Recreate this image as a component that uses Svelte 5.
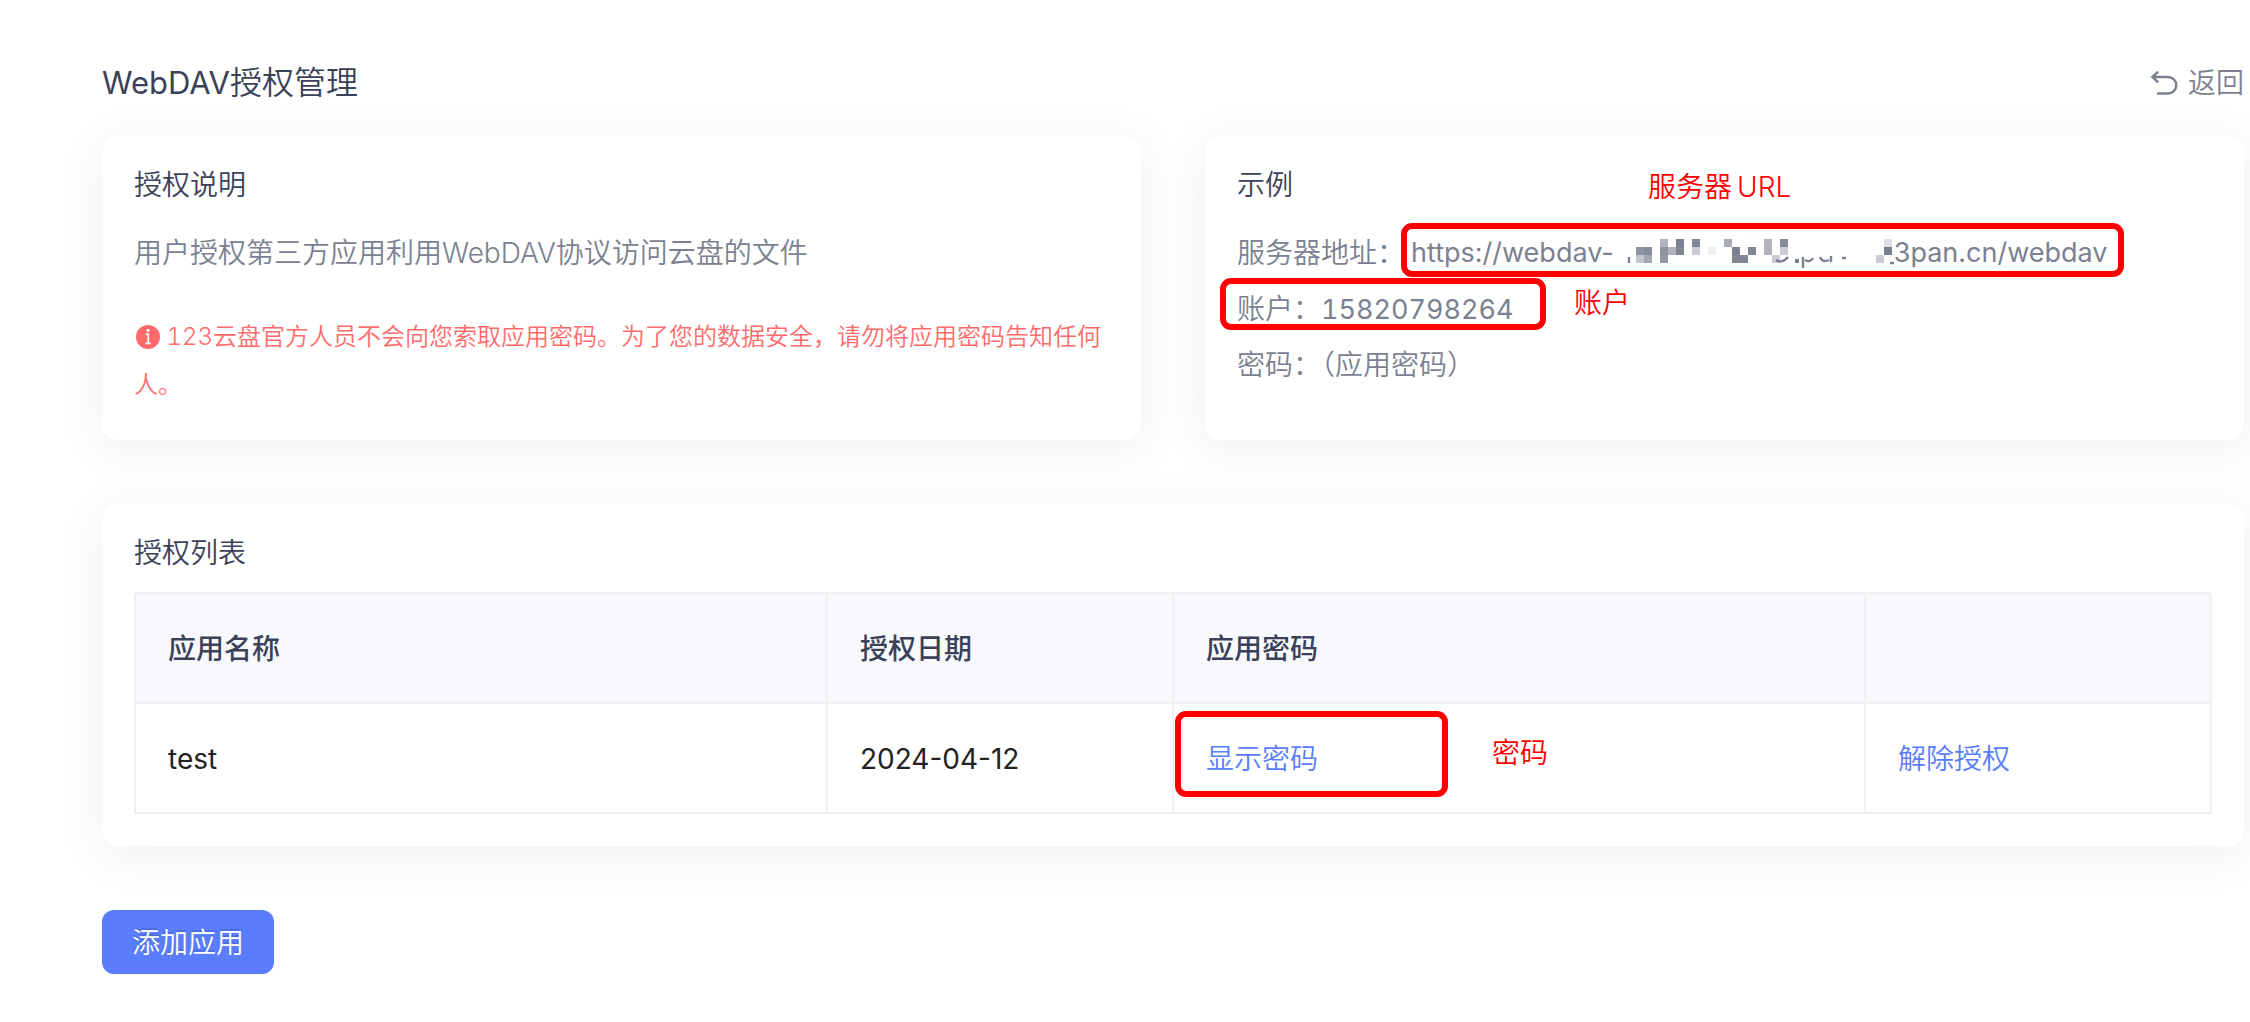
<script>
  const apps = [{ name: 'test', date: '2024-04-12' }];

  // Mosaic over the middle of the server host: x, y, opacity of each 8px block.
  const blocks = [
    [26, 6, 0.04], [18, 14, 0.85], [26, 14, 0.9], [18, 22, 0.45], [26, 22, 0.7],
    [42, 6, 0.6], [42, 14, 0.85], [42, 22, 0.8], [50, 14, 0.6], [58, 6, 1], [58, 14, 0.95],
    [74, 6, 0.95], [74, 14, 0.4], [90, 14, 0.12],
    [106, 6, 0.65], [114, 14, 1], [114, 22, 0.95], [122, 22, 0.95], [130, 14, 0.95], [130, 6, 0.03],
    [146, 6, 0.6], [146, 14, 0.6], [154, 22, 0.4], [162, 6, 0.9], [162, 14, 0.4],
    [258, 22, 0.4], [266, 14, 1], [266, 6, 0.25]
  ];
</script>

<main class="page">
  <header class="head">
    <h1><span class="latin">WebDAV</span>授权管理</h1>
    <a class="back" href="#back">
      <svg viewBox="0 0 28 28" width="28" height="28" aria-hidden="true">
        <path d="M8.2 2.6 2.4 8l5.8 5.4M2.6 8H18a8 8 0 0 1 0 16.5H7" fill="none" stroke="currentColor" stroke-width="2.5" />
      </svg>
      <span>返回</span>
    </a>
  </header>

  <div class="cards">
    <section class="card">
      <h2>授权说明</h2>
      <p class="text">用户授权第三方应用利用WebDAV协议访问云盘的文件</p>
      <p class="warn">
        <svg class="info" viewBox="0 0 26 24" width="26" height="24" aria-hidden="true">
          <circle cx="14" cy="12" r="12" fill="currentColor" />
          <circle cx="14" cy="5.4" r="1.6" fill="#fff" />
          <path d="M11.6 9.4h2.7v8.8M11.4 18.4h5.2" fill="none" stroke="#fff" stroke-width="1.6" />
        </svg>
        123云盘官方人员不会向您索取应用密码。为了您的数据安全，请勿将应用密码告知任何人。
      </p>
    </section>

    <section class="card">
      <h2>示例</h2>
      <p class="text url">
        服务器地址：<span class="latin host">https://webdav-</span><svg class="mosaic" viewBox="0 0 276 40" width="276" height="40" aria-hidden="true">
          {#each blocks as [x, y, o]}
            <rect {x} {y} width="8" height="8" fill="#7b8190" fill-opacity={o} />
          {/each}
          <g fill="none" stroke="#7b8190" stroke-width="2.4">
            <path d="M11 24v6M158 27q6 4 12-3M185 24v11M187 27q5 3 8-2M202 24q2 6 9 3M213 23v6M224 25h4M272 30h5" />
          </g>
          <rect x="177" y="26" width="4" height="4" fill="#7b8190" />
        </svg><span class="latin">3pan.cn/webdav</span>
      </p>
      <p class="text">账户：<span class="latin digits">15820798264</span></p>
      <p class="text">密码：（应用密码）</p>

      <span class="frame frame-url"></span>
      <span class="frame frame-user"></span>
      <span class="note note-url">服务器&#8201;URL</span>
      <span class="note note-user">账户</span>
    </section>
  </div>

  <section class="card">
    <h2>授权列表</h2>
    <table>
      <colgroup>
        <col class="wide" />
        <col class="narrow" />
        <col class="wide" />
        <col class="narrow" />
      </colgroup>
      <thead>
        <tr>
          <th scope="col">应用名称</th>
          <th scope="col">授权日期</th>
          <th scope="col">应用密码</th>
          <th scope="col" aria-label="操作"></th>
        </tr>
      </thead>
      <tbody>
        {#each apps as app}
          <tr>
            <td>{app.name}</td>
            <td>{app.date}</td>
            <td>
              <button class="link" type="button">显示密码</button>
              <span class="frame frame-pass"></span>
              <span class="note note-pass">密码</span>
            </td>
            <td><button class="link" type="button">解除授权</button></td>
          </tr>
        {/each}
      </tbody>
    </table>
  </section>

  <button class="add" type="button">添加应用</button>
</main>

<style>
  :global(body) {
    background: #fff;
  }

  .page {
    padding: 60px 6px 48px 102px;
    font-family: Inter, 'Noto Sans CJK SC', sans-serif;
    font-size: 28px;
    font-weight: 350;
    color: #3b4158;
  }

  .head {
    display: flex;
    align-items: center;
    justify-content: space-between;
    margin-bottom: 30px;
  }

  h1,
  h2,
  p {
    margin: 0;
    font-weight: inherit;
  }

  h1 {
    font-size: 32px;
    line-height: 46px;
  }

  .latin {
    font-size: 27px;
    font-weight: 400;
  }

  h1 .latin {
    font-size: 31px;
  }

  .digits {
    font-variant-numeric: tabular-nums;
  }

  .back {
    display: flex;
    align-items: center;
    gap: 10px;
    line-height: 46px;
    color: #7b8190;
    text-decoration: none;
  }

  .cards {
    display: grid;
    grid-template-columns: 1fr 1fr;
    gap: 64px;
    margin-bottom: 64px;
  }

  .card {
    position: relative;
    padding: 32px;
    border-radius: 16px;
    background: #fff;
    box-shadow: 0 8px 48px rgba(30, 50, 90, 0.08);
  }

  h2 {
    margin-bottom: 22px;
    font-size: 28px;
    line-height: 34px;
  }

  .cards .card {
    padding-bottom: 31px;
  }

  .cards h2 {
    margin-bottom: 23px;
  }

  .text {
    height: 56px;
    line-height: 56px;
    color: #7b8190;
  }

  .url {
    display: flex;
    align-items: center;
    white-space: nowrap;
  }

  .host {
    margin-left: 6px;
  }

  .mosaic {
    flex: none;
    margin-left: 4px;
  }

  .warn {
    margin-top: 32px;
    font-size: 24px;
    font-variant-numeric: tabular-nums;
    line-height: 48px;
    color: #ff6b6b;
  }

  .info {
    vertical-align: -4px;
  }

  table {
    width: 100%;
    table-layout: fixed;
    border: 2px solid #f0f0f0;
    border-width: 2px 0 0 2px;
    border-radius: 4px 4px 0 0;
    border-spacing: 0;
  }

  .wide {
    width: 33.3333%;
  }

  .narrow {
    width: 16.6667%;
  }

  th,
  td {
    position: relative;
    padding: 33px 32px 31px;
    border: 2px solid #f0f0f0;
    border-width: 0 2px 2px 0;
    text-align: left;
    line-height: 44px;
  }

  th {
    background: #f8f9fd;
    font-weight: 500;
  }

  th:last-child {
    border-top-right-radius: 4px;
  }

  td {
    color: #222;
    font-weight: 400;
  }

  button {
    border: 0;
    font: inherit;
    cursor: pointer;
  }

  .link {
    display: block;
    padding: 0;
    background: none;
    font-weight: 350;
    line-height: 44px;
    color: #597dfc;
  }

  .add {
    display: block;
    margin-top: 64px;
    padding: 2px 30px 0;
    border-radius: 12px;
    background: #597dfc;
    line-height: 62px;
    color: #fff;
    text-shadow: 0 -2px 0 rgba(0, 0, 0, 0.12);
  }

  .frame {
    position: absolute;
    box-sizing: border-box;
    border: 6px solid #f00;
    border-radius: 11px;
  }

  .frame-url {
    top: 87px;
    left: 196px;
    width: 723px;
    height: 54px;
  }

  .frame-user {
    top: 142px;
    left: 15px;
    width: 326px;
    height: 52px;
  }

  .frame-pass {
    top: 7px;
    left: 1px;
    width: 273px;
    height: 86px;
  }

  .note {
    position: absolute;
    line-height: 34px;
    white-space: nowrap;
    font-weight: 350;
    color: #f00;
  }

  .note-url {
    top: 34px;
    left: 443px;
  }

  .note-user {
    top: 150px;
    left: 369px;
  }

  .note-pass {
    top: 32px;
    left: 318px;
  }
</style>
